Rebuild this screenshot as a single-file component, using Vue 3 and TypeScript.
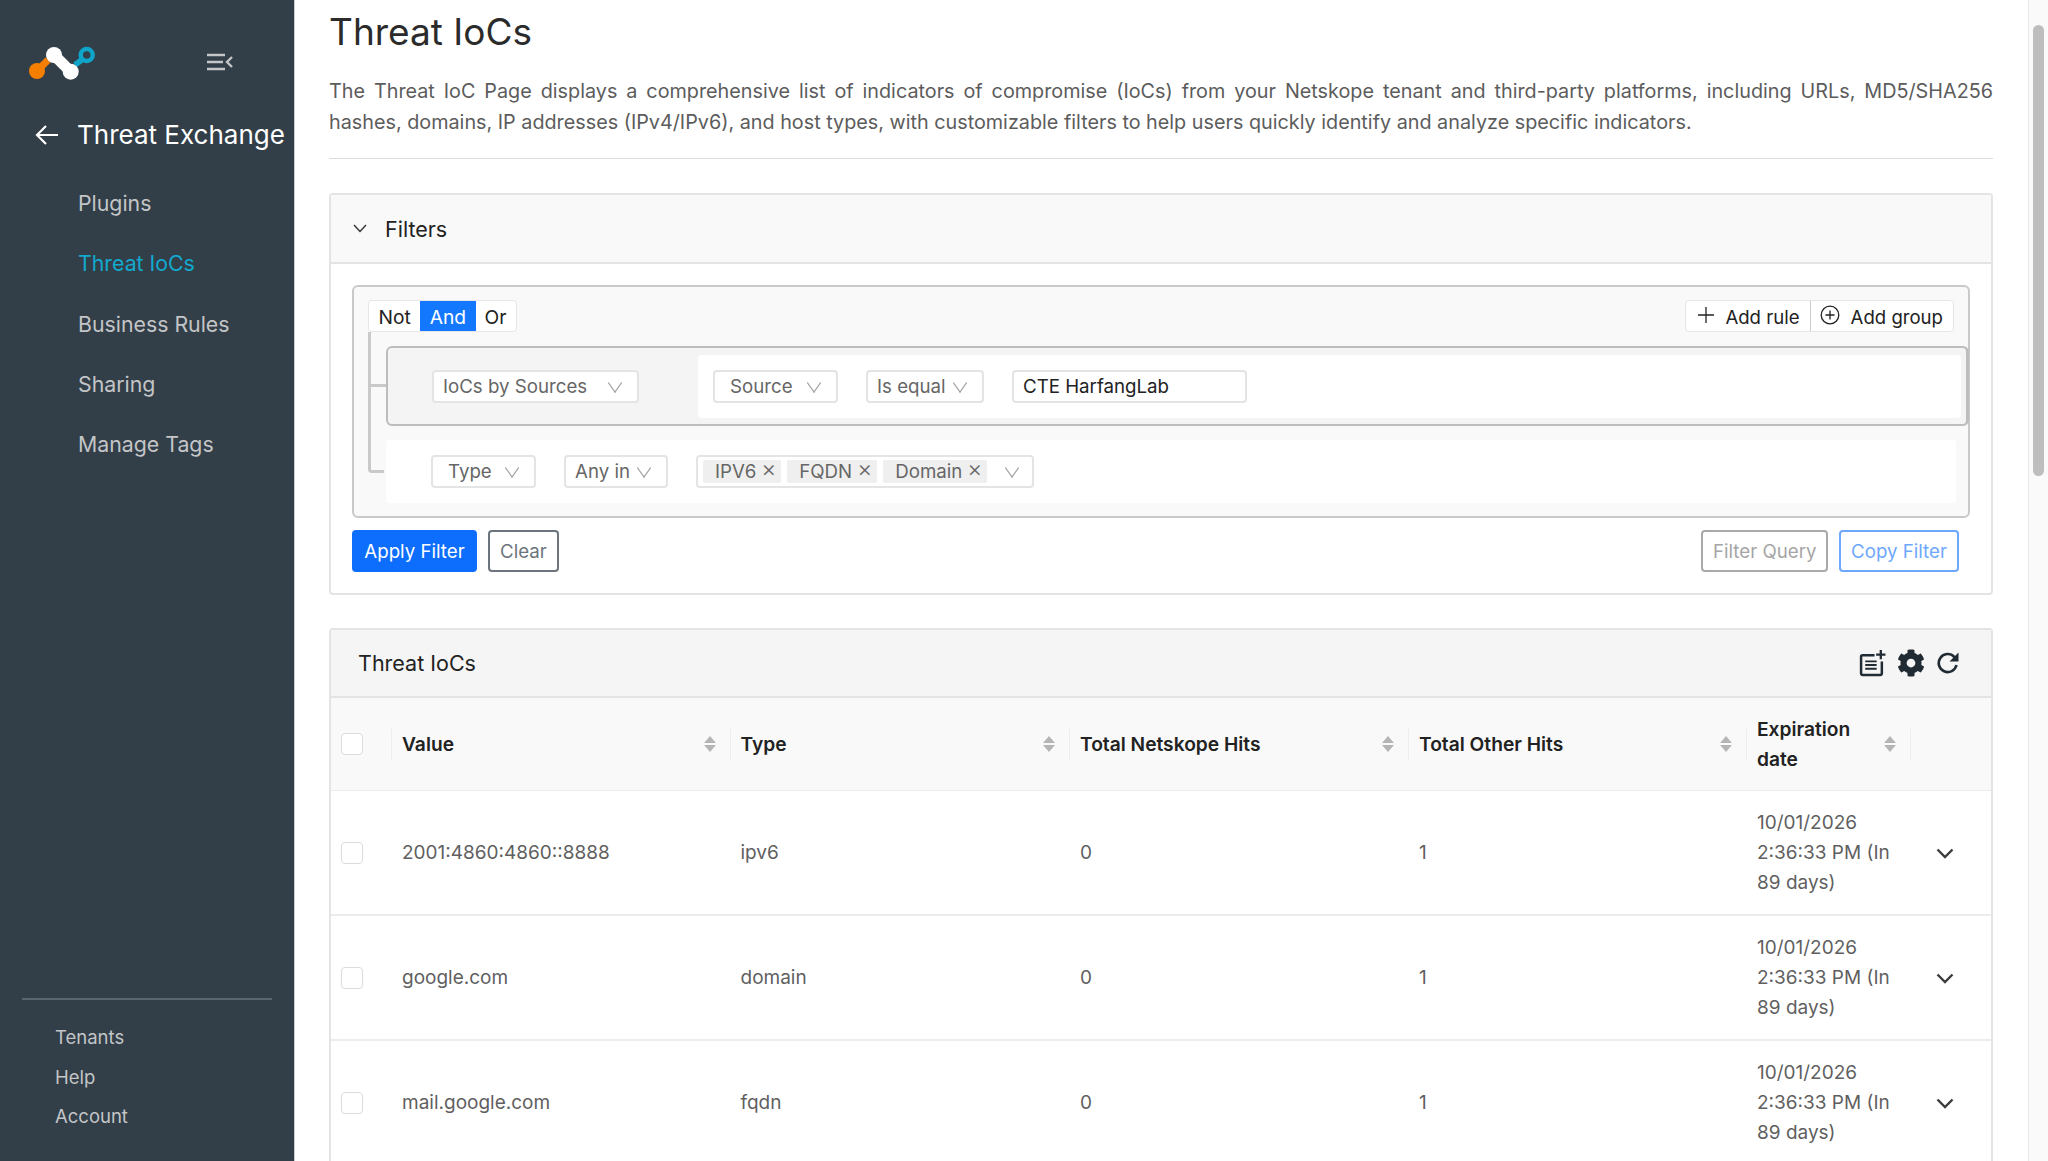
<template>
  <div class="layout">
    <aside class="sidebar">
      <div class="brand">
        <svg class="logo" width="66" height="36" viewBox="0 0 66 36">
          <path d="M8 27 L19 16" stroke="#f77f00" stroke-width="7" />
          <circle cx="8" cy="27" r="8" fill="#f77f00" />
          <path d="M46 21 L55 14" stroke="#0ea5c9" stroke-width="6" />
          <circle cx="57.700" cy="11" r="6" fill="none" stroke="#0ea5c9" stroke-width="4.500" />
          <path d="M25 11 L41.700 27.700" stroke="#fff" stroke-width="11" />
          <circle cx="25" cy="11" r="8" fill="#fff" />
          <circle cx="41.700" cy="27.700" r="8" fill="#fff" />
        </svg>
        <svg class="collapse" width="26" height="18" viewBox="0 0 26 18">
          <path d="M0 2h18M0 9h16M0 16h18" stroke="#c4c6c8" stroke-width="2.600" />
          <path d="M25 4l-5 5 5 5" stroke="#c4c6c8" stroke-width="2.400" fill="none" />
        </svg>
      </div>
      <div class="back">
        <svg width="24" height="22" viewBox="0 0 24 22">
          <path d="M23 11H2M11 2l-9 9 9 9" stroke="#fff" stroke-width="2.200" fill="none" />
        </svg>
        <span>Threat Exchange</span>
      </div>
      <nav class="nav">
        <a v-for="item in navItems" :key="item" :class="{ active: item === 'Threat IoCs' }">{{ item }}</a>
      </nav>
      <div class="sidebar-foot">
        <a v-for="item in footItems" :key="item">{{ item }}</a>
      </div>
    </aside>

    <main class="main">
      <h1>Threat IoCs</h1>
      <p class="intro">
        The Threat IoC Page displays a comprehensive list of indicators of compromise (IoCs) from your Netskope tenant
        and third-party platforms, including URLs, MD5/SHA256 hashes, domains, IP addresses (IPv4/IPv6), and host types,
        with customizable filters to help users quickly identify and analyze specific indicators.
      </p>

      <section class="card filters">
        <header class="filters-head">
          <svg width="14" height="9" viewBox="0 0 14 9">
            <path d="M1 1l6 6.500L13 1" stroke="#333" stroke-width="1.400" fill="none" />
          </svg>
          <span>Filters</span>
        </header>
        <div class="filters-body">
          <div class="builder">
            <div class="builder-top">
              <div class="logic">
                <span>Not</span>
                <span class="on">And</span>
                <span class="or">Or</span>
              </div>
              <div class="add">
                <span class="add-rule">
                  <svg width="16" height="16" viewBox="0 0 16 16">
                    <path d="M8 0v16M0 8h16" stroke="#222" stroke-width="1.300" />
                  </svg>
                  Add rule
                </span>
                <span class="add-group">
                  <svg width="20" height="20" viewBox="0 0 20 20">
                    <circle cx="10" cy="10" r="8.800" fill="none" stroke="#222" stroke-width="1.300" />
                    <path d="M10 5.500v9M5.500 10h9" stroke="#222" stroke-width="1.300" />
                  </svg>
                  Add group
                </span>
              </div>
            </div>

            <div class="rules">
              <div class="rule-box">
                <span class="select" style="width: 207px">IoCs by Sources<i class="chev"></i></span>
                <div class="rule-fields">
                  <span class="select center" style="width: 125px">Source<i class="chev"></i></span>
                  <span class="select" style="width: 118px">Is equal<i class="chev"></i></span>
                  <span class="input">CTE HarfangLab</span>
                </div>
              </div>
              <div class="rule-plain">
                <span class="select center" style="width: 105px">Type<i class="chev"></i></span>
                <span class="select" style="width: 104px">Any in<i class="chev"></i></span>
                <span class="tags">
                  <span v-for="tag in tags" :key="tag" class="tag">{{ tag }}<b>×</b></span>
                  <i class="chev"></i>
                </span>
              </div>
            </div>
          </div>

          <div class="actions">
            <button class="btn primary">Apply Filter</button>
            <button class="btn clear">Clear</button>
            <span class="spacer"></span>
            <button class="btn muted">Filter Query</button>
            <button class="btn outline">Copy Filter</button>
          </div>
        </div>
      </section>

      <section class="card results">
        <header class="results-head">
          <span>Threat IoCs</span>
          <div class="tools">
            <svg width="27" height="27" viewBox="0 0 26 26">
              <path d="M15 5H3.500A1.500 1.500 0 0 0 2 6.500v16A1.500 1.500 0 0 0 3.500 24h17a1.500 1.500 0 0 0 1.500-1.500V11" fill="none" stroke="#212b33" stroke-width="2.400" />
              <path d="M6 11h11M6 14.500h11M6 18h11" stroke="#212b33" stroke-width="1.800" />
              <path d="M21 0v9M16.500 4.500h9" stroke="#212b33" stroke-width="2.200" />
            </svg>
            <svg width="28" height="28" viewBox="0 0 512 512">
              <path fill="#212b33" d="M487.400 315.700l-42.600-24.600c4.300-23.200 4.300-47 0-70.200l42.600-24.600c4.900-2.800 7.100-8.600 5.500-14-11.100-35.600-30-67.800-54.700-94.600-3.800-4.100-10-5.100-14.800-2.300L380.800 110c-17.900-15.400-38.500-27.300-60.800-35.100V25.800c0-5.600-3.900-10.500-9.400-11.700-36.700-8.200-74.300-7.800-109.200 0-5.500 1.200-9.400 6.100-9.400 11.700V75c-22.200 7.900-42.800 19.800-60.800 35.100L88.700 85.500c-4.900-2.800-11-1.900-14.800 2.300-24.700 26.700-43.600 58.900-54.700 94.600-1.700 5.400.6 11.200 5.500 14L67.300 221c-4.300 23.200-4.300 47 0 70.200l-42.600 24.600c-4.900 2.800-7.100 8.600-5.500 14 11.100 35.600 30 67.800 54.700 94.600 3.800 4.100 10 5.100 14.800 2.300l42.600-24.600c17.900 15.400 38.500 27.300 60.800 35.100v49.200c0 5.600 3.900 10.500 9.400 11.700 36.700 8.200 74.300 7.800 109.200 0 5.500-1.200 9.400-6.100 9.400-11.700v-49.200c22.200-7.900 42.800-19.800 60.800-35.100l42.600 24.600c4.900 2.800 11 1.900 14.800-2.300 24.700-26.700 43.600-58.900 54.700-94.600 1.500-5.500-.7-11.300-5.600-14.100zM256 336c-44.100 0-80-35.900-80-80s35.900-80 80-80 80 35.900 80 80-35.900 80-80 80z" />
            </svg>
            <svg width="24" height="24" viewBox="0 0 24 24">
              <path d="M20.500 14a9 9 0 1 1-2.300-8.200L21 9" fill="none" stroke="#212b33" stroke-width="2.600" />
              <path d="M22.500 1.500V10.500H13.500Z" fill="#212b33" />
            </svg>
          </div>
        </header>

        <div class="row head">
          <div class="cell check"><span class="box"></span></div>
          <div v-for="col in columns" :key="col" class="cell th">
            <span class="th-label">{{ col }}</span>
            <span class="sort"><i class="up"></i><i class="down"></i></span>
          </div>
          <div class="cell"></div>
        </div>

        <div v-for="row in rows" :key="row.value" class="row body">
          <div class="cell check"><span class="box"></span></div>
          <div class="cell td">{{ row.value }}</div>
          <div class="cell td">{{ row.type }}</div>
          <div class="cell td">{{ row.netskope }}</div>
          <div class="cell td">{{ row.other }}</div>
          <div class="cell td expiry">{{ row.expires }}</div>
          <div class="cell expand">
            <svg width="18" height="11" viewBox="0 0 18 11">
              <path d="M1.500 1.500L9 9l7.500-7.500" stroke="#3c3c3c" stroke-width="2.400" fill="none" />
            </svg>
          </div>
        </div>
      </section>
    </main>

    <div class="scrollbar"><div class="thumb"></div></div>
  </div>
</template>

<script setup lang="ts">
interface IocRow {
  value: string
  type: string
  netskope: number
  other: number
  expires: string
}

const navItems = ['Plugins', 'Threat IoCs', 'Business Rules', 'Sharing', 'Manage Tags']
const footItems = ['Tenants', 'Help', 'Account']
const tags = ['IPV6', 'FQDN', 'Domain']
const columns = ['Value', 'Type', 'Total Netskope Hits', 'Total Other Hits', 'Expiration date']

const expires = '10/01/2026 2:36:33 PM (In 89 days)'
const rows: IocRow[] = [
  { value: '2001:4860:4860::8888', type: 'ipv6', netskope: 0, other: 1, expires },
  { value: 'google.com', type: 'domain', netskope: 0, other: 1, expires },
  { value: 'mail.google.com', type: 'fqdn', netskope: 0, other: 1, expires },
]
</script>

<style>
html,
body {
  margin: 0;
  height: 100%;
  overflow: hidden;
  background: #fff;
}
</style>

<style scoped>
.layout {
  display: flex;
  height: 1161px;
  overflow: hidden;
  font-family: Inter, 'Liberation Sans', sans-serif;
  color: #222;
}
.sidebar {
  width: 295px;
  flex: none;
  height: 100%;
  box-sizing: border-box;
  background: #323e48;
  border-right: 1px solid #c8cdd1;
  display: flex;
  flex-direction: column;
  color: #c3c5c7;
}
.brand {
  display: flex;
  align-items: center;
  height: 36px;
  margin-top: 44px;
  padding-left: 29px;
}
.logo {
  flex: none;
}
.collapse {
  margin-left: 112px;
}
.back {
  display: flex;
  align-items: center;
  gap: 18px;
  margin-top: 37px;
  padding-left: 35px;
  font-size: 26px;
  line-height: 36px;
  color: #fff;
  white-space: nowrap;
}
.nav {
  display: flex;
  flex-direction: column;
  margin-top: 20px;
  padding-left: 78px;
  font-size: 21.300px;
}
.nav a {
  height: 60.250px;
  line-height: 60px;
}
.nav a.active {
  color: #12a9cf;
}
.sidebar-foot {
  margin: auto 22px 0;
  padding: 18px 0 24px 33px;
  border-top: 2px solid #5b656d;
  display: flex;
  flex-direction: column;
  font-size: 18.500px;
}
.sidebar-foot a {
  height: 39.700px;
  line-height: 39.700px;
}

.main {
  width: 1664px;
  flex: none;
  margin-left: 34px;
}
h1 {
  margin: 0;
  font-size: 37px;
  font-weight: 400;
  line-height: 46px;
  margin-top: 9px;
  color: #2b2b2b;
}
.intro {
  margin: 21px 0 0;
  padding-bottom: 20px;
  border-bottom: 1px solid #dcdcdc;
  font-size: 19.800px;
  line-height: 31px;
  color: #5c5c5c;
  text-align: justify;
}
.card {
  border: 2px solid #e4e4e4;
  border-radius: 4px;
  box-sizing: border-box;
}
.filters {
  margin-top: 34px;
  height: 402px;
}
.filters-head {
  height: 67px;
  display: flex;
  align-items: center;
  gap: 18px;
  padding-left: 22px;
  background: #f9f9f9;
  border-bottom: 2px solid #e4e4e4;
  font-size: 21.500px;
}
.filters-body {
  padding: 21px 22px 0 21px;
}
.builder {
  width: 1618px;
  height: 233px;
  box-sizing: border-box;
  border: 2px solid #c9c9c9;
  border-radius: 6px;
  background: #f9f9f9;
  padding: 13px 0 0 14px;
}
.builder-top {
  display: flex;
  justify-content: space-between;
  padding-right: 14px;
}
.logic,
.add {
  display: flex;
  height: 32px;
  background: #fff;
  border: 1px solid #e6e6e6;
  border-radius: 4px;
  box-sizing: border-box;
  align-items: stretch;
}
.logic {
  font-size: 19.200px;
}
.add {
  font-size: 18.600px;
}
.logic span {
  display: flex;
  align-items: center;
  padding: 2px 9.500px 0;
}
.logic .on {
  background: #1478ff;
  color: #fff;
}
.logic .or {
  padding: 2px 10px 0 9px;
}
.add span {
  display: flex;
  align-items: center;
  gap: 11px;
  padding-top: 2px;
}
.add-rule {
  padding: 0 10px 0 12px;
  border-right: 1px solid #ccc;
}
.add-group {
  padding: 0 10px 0 9px;
}
.add svg {
  margin-top: -4px;
}
.rules {
  position: relative;
  margin: 14px 0 0 18px;
}
.rules::before {
  content: '';
  position: absolute;
  left: -18px;
  top: -14px;
  width: 16px;
  height: 141px;
  border-left: 3px solid #c9c9c9;
  border-bottom: 3px solid #c9c9c9;
  border-bottom-left-radius: 4px;
  box-sizing: border-box;
}
.rules::after {
  content: '';
  position: absolute;
  left: -16px;
  top: 38px;
  width: 16px;
  height: 3px;
  background: #c9c9c9;
}
.rule-box {
  height: 80px;
  box-sizing: border-box;
  width: 1583px;
  border: 2px solid #bdbdbd;
  border-right-width: 3px;
  border-radius: 6px;
  background: #f4f4f4;
  padding: 7px 5px 6px 44px;
  display: flex;
  align-items: stretch;
  gap: 59px;
}
.rule-box > .select {
  align-self: center;
}
.rule-fields {
  flex: 1;
  background: #fff;
  border-radius: 4px;
  display: flex;
  align-items: center;
  padding-left: 15px;
  gap: 28px;
}
.rule-plain {
  height: 63px;
  width: 1570px;
  margin-top: 14px;
  box-sizing: border-box;
  border-radius: 4px;
  background: #fff;
  display: flex;
  align-items: center;
  padding-left: 45px;
  gap: 28px;
}
.select,
.input,
.tags {
  height: 33px;
  box-sizing: border-box;
  border: 2px solid #e4e4e4;
  border-radius: 4px;
  background: #fff;
  font-size: 18.700px;
  display: flex;
  align-items: center;
  color: #666;
  white-space: nowrap;
}
.select {
  padding: 0 17px 0 9px;
  justify-content: space-between;
}
.select.center {
  padding-left: 15px;
}
.input {
  width: 235px;
  padding-left: 9px;
  color: #222;
}
.tags {
  width: 338px;
  padding: 0 15px 0 5px;
  gap: 6px;
}
.tags .chev {
  margin-left: auto;
}
.tag {
  display: flex;
  align-items: center;
  height: 23px;
  padding: 0 5px 0 12px;
  gap: 5px;
  background: #efefef;
  border-radius: 2px;
}
.tag b {
  font-weight: 300;
  font-size: 23px;
  margin-top: -5px;
}
.chev {
  width: 9px;
  height: 9px;
  border-right: 1.300px solid #a0a0a0;
  border-bottom: 1.300px solid #a0a0a0;
  transform: scaleY(1.400) rotate(45deg);
  margin-top: -8px;
  flex: none;
}
.actions {
  display: flex;
  gap: 11px;
  margin-top: 12px;
  padding-right: 10px;
}
.spacer {
  flex: 1;
}
.btn {
  height: 42px;
  box-sizing: border-box;
  border-radius: 4px;
  background: #fff;
  font: inherit;
  font-size: 18.700px;
  padding: 0 10px;
  border: 2px solid #6c757d;
  color: #6c757d;
  white-space: nowrap;
}
.primary {
  background: #0d6efd;
  border-color: #0d6efd;
  color: #fff;
  width: 125px;
}
.muted {
  border-color: #a9a9a9;
  color: #a5a5a5;
  width: 127px;
}
.outline {
  border-color: #6ea7fe;
  color: #6ea7fe;
  width: 120px;
}
.results {
  margin-top: 33px;
  border-bottom: 0;
}
.results-head {
  height: 66px;
  display: flex;
  align-items: center;
  justify-content: space-between;
  padding: 0 31px 0 27px;
  background: #f5f5f5;
  border-bottom: 2px solid #e4e4e4;
  font-size: 21.500px;
}
.tools {
  display: flex;
  align-items: center;
  gap: 11px;
}
.row {
  display: grid;
  grid-template-columns: 60px 338.500px 339.500px 339px 338px 164px 1fr;
}
.head {
  height: 93px;
  background: #f9f9f9;
  border-bottom: 1px solid #ececec;
  box-sizing: border-box;
}
.body {
  height: 125px;
  box-sizing: border-box;
  border-bottom: 2px solid #ececec;
  padding-top: 1px;
}
.cell {
  display: flex;
  align-items: center;
  min-width: 0;
}
.check {
  padding-left: 10px;
}
.box {
  width: 22px;
  height: 22px;
  box-sizing: border-box;
  border: 1.500px solid #dcdcdc;
  border-radius: 4px;
  background: #fff;
}
.th {
  position: relative;
  padding: 0 14px 0 11px;
  justify-content: space-between;
  font-size: 19.200px;
  font-weight: 600;
  line-height: 30px;
  color: #222;
}
.th::before {
  content: '';
  position: absolute;
  left: 0;
  top: 31px;
  height: 31px;
  border-left: 1.500px solid #ededed;
}
.head .cell:last-child {
  border-left: 1.500px solid #ededed;
  height: 31px;
  margin-top: 31px;
}
.sort {
  display: flex;
  flex-direction: column;
  gap: 2px;
}
.sort i {
  width: 0;
  height: 0;
  border-left: 6px solid transparent;
  border-right: 6px solid transparent;
}
.sort .up {
  border-bottom: 7px solid #b5b5b5;
}
.sort .down {
  border-top: 7px solid #b5b5b5;
}
.td {
  padding-left: 11px;
  font-size: 19px;
  line-height: 30px;
  color: #5f5f5f;
}
.expand {
  padding-left: 26px;
}
.scrollbar {
  position: fixed;
  top: 0;
  right: 0;
  width: 20px;
  height: 100%;
  box-sizing: border-box;
  background: #fafafa;
  border-left: 1px solid #e8e8e8;
}
.thumb {
  position: absolute;
  top: 25px;
  right: 4px;
  width: 11px;
  height: 451px;
  background: #bebebe;
  border-radius: 6px;
}
</style>
